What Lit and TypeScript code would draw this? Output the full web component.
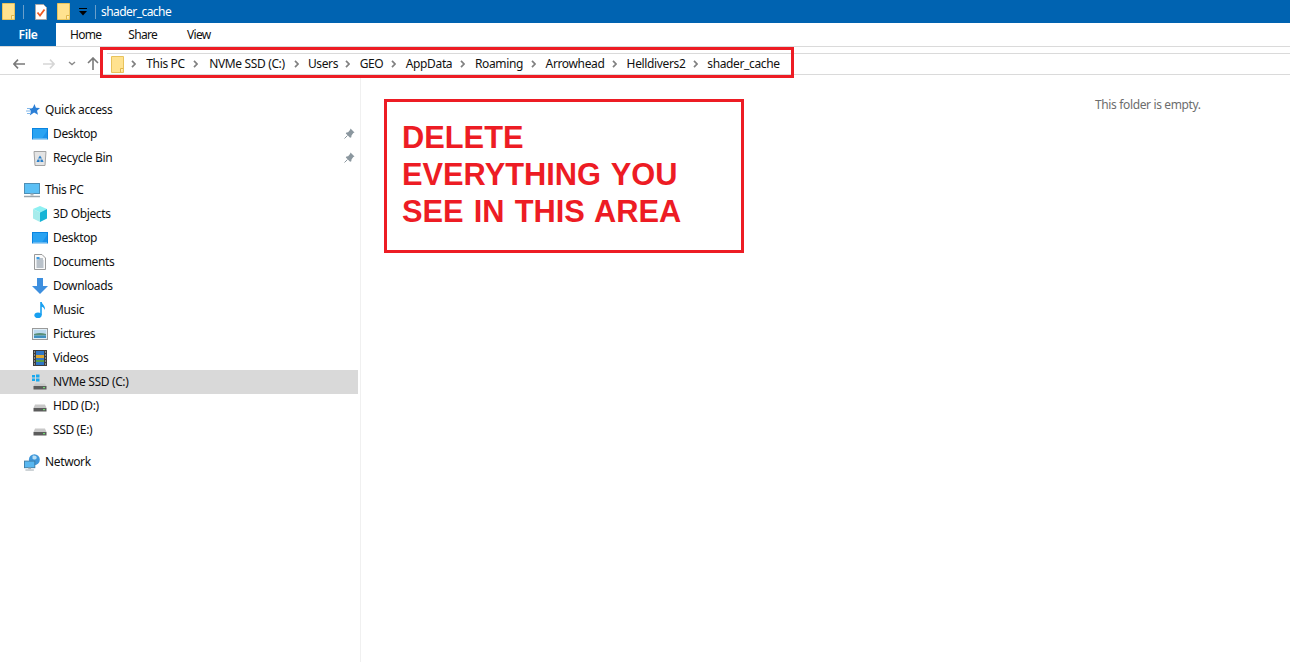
import { LitElement, html, css, svg } from "lit";
import { customElement } from "lit/decorators.js";

const folder = svg`<svg width="13" height="17" viewBox="0 0 13 17"><path d="M.5.5h12v16H.5z" fill="#ffe28f" stroke="#e8c35c"/><path d="M9.500 16.500v-4h3" fill="#ffeeb5" stroke="#e0b64a"/></svg>`;
const chev = svg`<svg class="chev" width="5" height="8" viewBox="0 0 5 8"><path d="M1 .8 4 4 1 7.2" fill="none" stroke="#808080" stroke-width="1.700"/></svg>`;

const icons: Record<string, unknown> = {
  star: svg`<svg width="16" height="16" viewBox="0 0 16 16"><path d="M10.500 2l1.400 3.800 4.100.3-3 2.600 1 4-3.900-2.300-4.300 3.200L7 9 5.500 7.200l3.300-1.400z" fill="#2b7fd6"/><path d="M3 6.500h4M2 9h5M3 11.500h3.500" stroke="#7fb6ea" stroke-width="1"/></svg>`,
  desktop: svg`<svg width="16" height="16" viewBox="0 0 16 16"><rect x="0" y="2" width="16" height="11.500" fill="#0a84e0"/><rect x="1" y="3" width="14" height="9.500" fill="#29a3f2"/><path d="M10 12.500 15 5v7.500z" fill="#1b92ea"/><path d="M1 13h14" stroke="#d5ecfb" stroke-width=".8"/></svg>`,
  bin: svg`<svg width="14" height="16" viewBox="0 0 14 16"><path d="M1 1.500h12l-1 14H2z" fill="#e4e4e4" stroke="#a3a3a3"/><path d="M7 5.500l2 3H5zM4.500 9.500l-1 2.500h3v-2.500zM9.500 9.500l1 2.500h-3v-2.500z" fill="#2a7fc9"/></svg>`,
  pc: svg`<svg width="16" height="16" viewBox="0 0 16 16"><rect x=".5" y="1.500" width="15" height="10" fill="#5cc0f5" stroke="#4f8fb5"/><path d="M6.500 11.500h3v2h-3z" fill="#a9b4bb"/><path d="M0 14.500h16" stroke="#9aa4ab" stroke-width="1.500"/></svg>`,
  cube: svg`<svg width="16" height="16" viewBox="0 0 16 16"><path d="M8 0l7 3-7 3.500L1 3z" fill="#8ef0f2"/><path d="M1 3l7 3.500V16l-7-3.500z" fill="#a6ecec"/><path d="M15 3 8 6.500V16l7-3.500z" fill="#16b4d6"/></svg>`,
  doc: svg`<svg width="12" height="16" viewBox="0 0 12 16"><path d="M.5.500h7.500l3.500 3.500v11.500H.5z" fill="#fafafa" stroke="#9a9a9a"/><path d="M2.500 7h7M2.500 9h7M2.500 11h7M2.500 13h7M5 5h4" stroke="#7a8a9a"/><path d="M2.500 3h3v2.500h-3z" fill="#3c9ae0"/></svg>`,
  down: svg`<svg width="16" height="16" viewBox="0 0 16 16"><path d="M5 0h6v8h5l-8 8-8-8h5z" fill="#3d8fdf"/></svg>`,
  music: svg`<svg width="12" height="16" viewBox="0 0 12 16"><ellipse cx="4" cy="13.200" rx="3.600" ry="2.800" fill="#18a0f0"/><path d="M6.200 13V0h1.600c.3 2.500 3.800 3.500 3.200 8-.7-2-2.300-3-3.200-3.200V13z" fill="#18a0f0"/></svg>`,
  pic: svg`<svg width="16" height="12" viewBox="0 0 16 12"><rect x=".5" y=".5" width="15" height="11" fill="#dfeef7" stroke="#9a9a9a"/><path d="M2 2h12v4H2z" fill="#bcd9ee"/><path d="M2 6c4-1.500 8-1.500 12 0v1.500H2z" fill="#5a8f78"/><path d="M2 7.500h12V10H2z" fill="#3f8fbf"/></svg>`,
  film: svg`<svg width="14" height="16" viewBox="0 0 14 16"><rect width="14" height="16" fill="#3d3d3d"/><rect x="3" y="1" width="8" height="14" fill="#2f77c8"/><path d="M3 5h8v3H3z" fill="#e0a92f"/><path d="M3 10h8v2H3z" fill="#5aa04a"/><path d="M1 1.500h1v1H1zM1 4.500h1v1H1zM1 7.500h1v1H1zM1 10.500h1v1H1zM1 13.500h1v1H1zM12 1.500h1v1h-1zM12 4.500h1v1h-1zM12 7.500h1v1h-1zM12 10.500h1v1h-1zM12 13.500h1v1h-1z" fill="#ddd"/></svg>`,
  cdrive: svg`<svg width="16" height="16" viewBox="0 0 16 16"><path d="M0 1h3v2.500H0zM4 .500h3.500v3H4zM0 4.500h3V7H0zM4 4.500h3.500V7.500H4z" fill="#18a8ee"/><path d="M3 9.500h10l1.500 2.500h-13z" fill="#c8c8c8"/><rect x="1.500" y="12" width="13" height="3.500" fill="#5c5c5c"/><rect x="11" y="13" width="2" height="1.200" fill="#6fdc6f"/></svg>`,
  drive: svg`<svg width="16" height="16" viewBox="0 0 16 16"><path d="M3 6.500h10L14.500 10h-13z" fill="#c8c8c8"/><rect x="1.500" y="10" width="13" height="3.500" fill="#5c5c5c"/><rect x="11" y="11" width="2" height="1.200" fill="#6fdc6f"/></svg>`,
  net: svg`<svg width="17" height="17" viewBox="0 0 17 17"><circle cx="11" cy="5.500" r="5.800" fill="#3f97da"/><path d="M9 1.500c2-1 4.500 0 4.500 2S10 6 9 4.500z" fill="#b9dff5"/><rect x=".5" y="7" width="11" height="7" fill="#58b7f0" stroke="#3c7ea8"/><path d="M4.500 14h3v1.500h-3z" fill="#a9b4bb"/><path d="M1.500 16.500h9" stroke="#9aa4ab"/></svg>`,
};

const pin = svg`<svg width="11" height="11" viewBox="0 0 11 11"><path d="M6.500.5l4 4-1.200.6-1.800 2.400-.2 1.800-1.200.4L1.800 5.500l.6-1 1.700-.2L6 2z" fill="#8b979f"/><path d="M3.500 7.500.5 10.500" stroke="#8b979f"/></svg>`;

type Row = { label: string; icon: string; level: 1 | 2; pin?: boolean; sel?: boolean; gap?: boolean };
const rows: Row[] = [
  { label: "Quick access", icon: "star", level: 1 },
  { label: "Desktop", icon: "desktop", level: 2, pin: true },
  { label: "Recycle Bin", icon: "bin", level: 2, pin: true },
  { label: "This PC", icon: "pc", level: 1, gap: true },
  { label: "3D Objects", icon: "cube", level: 2 },
  { label: "Desktop", icon: "desktop", level: 2 },
  { label: "Documents", icon: "doc", level: 2 },
  { label: "Downloads", icon: "down", level: 2 },
  { label: "Music", icon: "music", level: 2 },
  { label: "Pictures", icon: "pic", level: 2 },
  { label: "Videos", icon: "film", level: 2 },
  { label: "NVMe SSD (C:)", icon: "cdrive", level: 2, sel: true },
  { label: "HDD (D:)", icon: "drive", level: 2 },
  { label: "SSD (E:)", icon: "drive", level: 2 },
  { label: "Network", icon: "net", level: 1, gap: true },
];
const crumbs: [string, number][] = [["This PC", 39], ["NVMe SSD (C:)", 78], ["Users", 28], ["GEO", 23], ["AppData", 46], ["Roaming", 48], ["Arrowhead", 58], ["Helldivers2", 58], ["shader_cache", 71]];

@customElement("app-root")
export class AppRoot extends LitElement {
  static styles = css`
    :host { display: block; width: 1290px; height: 662px; overflow: hidden; background: #fff; font: 12px/16px "Noto Sans", sans-serif; letter-spacing: -0.36px; color: #111; position: relative; }
    .title { height: 23px; background: #0063b1; display: flex; align-items: center; color: #fff; }
    .title svg { flex: none; }
    .qa1 { margin-left: 2px; display: flex; }
    .sep { width: 1px; height: 14px; background: #6a9fca; }
    .sep1 { margin: 0 11px 0 8px; }
    .doc { margin-right: 10px; }
    .caret { margin: 0 8px 0 9px; }
    .sep2 { margin-right: 5px; }
    .name { letter-spacing: -0.55px; }
    .tabs { height: 24px; box-sizing: border-box; display: flex; border-bottom: 1px solid #dadada; }
    .file { width: 56px; background: #0063b1; color: #fff; display: flex; align-items: center; justify-content: center; font-weight: 600; }
    .tab { display: flex; align-items: center; letter-spacing: -0.7px; }
    .home { margin-left: 14px; }
    .share { margin-left: 27px; }
    .view { margin-left: 30px; }
    .nav { height: 28px; box-sizing: border-box; display: flex; align-items: flex-end; border-bottom: 1px solid #dadada; }
    .btns { width: 107px; height: 21px; flex: none; display: flex; align-items: center; }
    .b1 { margin-left: 13px; }
    .b2 { margin-left: 18px; }
    .b3 { margin-left: 13px; }
    .b4 { margin-left: 11px; }
    .addr { flex: 1; height: 21px; border-top: 1px solid #dadada; display: flex; align-items: center; padding-left: 4px; box-sizing: border-box; }
    .afolder { margin-right: 7px; flex: none; display: flex; }
    .crumb { margin-right: 8px; flex: none; display: flex; justify-content: center; white-space: nowrap; }
    .crumb:last-child { margin-right: 0; }
    .chev { margin-right: 10px; flex: none; }
    .body { display: flex; height: 587px; position: relative; }
    .side { width: 361px; box-sizing: border-box; border-right: 1px solid #f0f0f0; padding-top: 23px; flex: none; }
    .row { height: 24px; width: 358px; display: flex; align-items: center; position: relative; }
    .row.gap { margin-top: 8px; }
    .row.sel { background: #d9d9d9; }
    .ico { width: 16px; height: 16px; display: flex; align-items: center; justify-content: center; flex: none; margin-right: 5px; }
    .l1 { padding-left: 24px; box-sizing: border-box; }
    .l2 { padding-left: 32px; box-sizing: border-box; }
    .pin { position: absolute; left: 344px; top: 6px; display: flex; }
    .main { flex: 1; position: relative; }
    .empty { position: absolute; left: 734px; top: 22px; color: #6d6d6d; }
    .note { position: absolute; left: 23px; top: 24px; width: 360px; height: 154px; box-sizing: border-box; border: 3px solid #ed1c24; padding: 17px 0 0 15px; color: #ed1c24; font: bold 30.8px/37px "Liberation Sans", Arial, sans-serif; letter-spacing: 0; word-spacing: 1.600px; }
    .addrbox { position: absolute; left: 100px; top: 47px; width: 694px; height: 31px; box-sizing: border-box; border: 3px solid #ed1c24; }
  `;
  render() {
    return html`
      <div class="title">
        <span class="qa1">${folder}</span><span class="sep sep1"></span>
        <svg class="doc" width="12" height="16" viewBox="0 0 12 16"><path d="M.5.500h8l3 3v12H.5z" fill="#fff" stroke="#aaa"/><path d="M2.500 8.500l2.500 3 4.500-6" fill="none" stroke="#f05a22" stroke-width="1.800"/></svg>
        ${folder}
        <svg class="caret" width="8" height="8" viewBox="0 0 8 8"><path d="M0 .5h8" stroke="#000"/><path d="M0 3h8L4 7.500z" fill="#000"/></svg>
        <span class="sep sep2"></span>
        <span class="name">shader_cache</span>
      </div>
      <div class="tabs">
        <div class="file">File</div>
        <div class="tab home">Home</div>
        <div class="tab share">Share</div>
        <div class="tab view">View</div>
      </div>
      <div class="nav">
        <div class="btns">
          <svg class="b1" width="12" height="10" viewBox="0 0 12 10"><path d="M5 .6.900 5 5 9.400M1 5h11" fill="none" stroke="#7a7a7a" stroke-width="1.600"/></svg>
          <svg class="b2" width="12" height="10" viewBox="0 0 12 10"><path d="M7 .6 11.100 5 7 9.400M11 5H0" fill="none" stroke="#d6d6d6" stroke-width="1.600"/></svg>
          <svg class="b3" width="8" height="5" viewBox="0 0 8 5"><path d="M1 1l3 2.500L7 1" fill="none" stroke="#8a8a8a" stroke-width="1.400"/></svg>
          <svg class="b4" width="12" height="13" viewBox="0 0 12 13"><path d="M1 6l5-5 5 5M6 1v12" fill="none" stroke="#7a7a7a" stroke-width="1.600"/></svg>
        </div>
        <div class="addr">
          <span class="afolder">${folder}</span>
          ${crumbs.map(([c, w]) => html`${chev}<span class="crumb" style="width:${w}px">${c}</span>`)}
        </div>
      </div>
      <div class="body">
        <div class="side">
          ${rows.map((r) => html`
            <div class="row ${r.level === 1 ? "l1" : "l2"} ${r.sel ? "sel" : ""} ${r.gap ? "gap" : ""}">
              <span class="ico">${icons[r.icon]}</span><span>${r.label}</span>
              ${r.pin ? html`<span class="pin">${pin}</span>` : ""}
            </div>`)}
        </div>
        <div class="main">
          <div class="empty">This folder is empty.</div>
          <div class="note">DELETE<br />EVERYTHING YOU<br />SEE IN THIS AREA</div>
        </div>
      </div>
      <div class="addrbox"></div>
    `;
  }
}
